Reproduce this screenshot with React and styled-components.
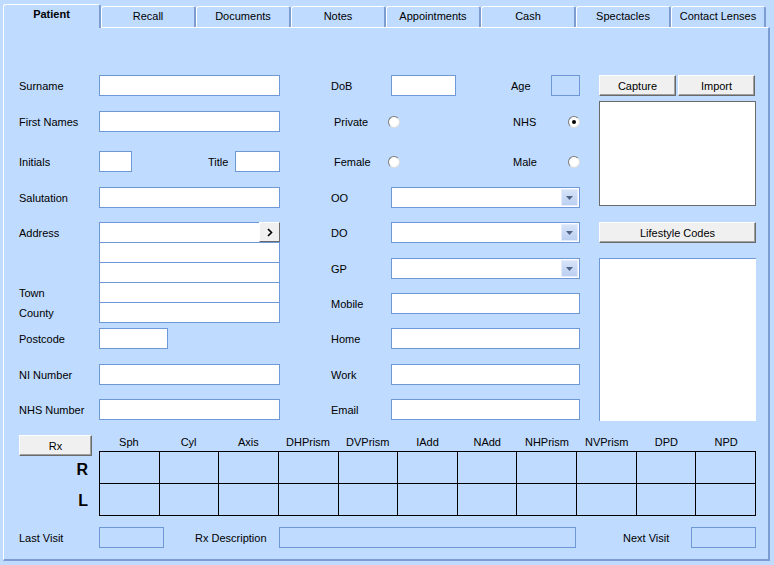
import React from 'react';
import styled, { createGlobalStyle } from 'styled-components';

const GlobalStyle = createGlobalStyle`
  html, body {
    margin: 0;
    padding: 0;
    background: #bfdbff;
  }
  body {
    font-family: "Liberation Sans", Arial, sans-serif;
    font-size: 11px;
    color: #000;
  }
  * {
    box-sizing: border-box;
  }
`;

const Screen = styled.div`
    width: 774px;
    height: 565px;
    padding: 4px 0 0 3px;
    background: #bfdbff;
`;

const TabStrip = styled.div`
    display: flex;
    align-items: flex-end;
    height: 23px;
`;

const Tab = styled.div`
    position: relative;
    z-index: ${p => (p.$active ? 2 : 1)};
    display: flex;
    align-items: center;
    justify-content: center;
    width: ${p => (p.$active ? 98 : 95)}px;
    height: ${p => (p.$active ? 24 : 21)}px;
    margin-bottom: ${p => (p.$active ? -1 : 0)}px;
    padding-bottom: ${p => (p.$active ? 5 : 3)}px;
    background: #bfdbff;
    border-top: 1px solid #ffffff;
    border-left: 1px solid #ffffff;
    border-right: 2px solid #7c9cd2;
    border-radius: 3px 3px 0 0;
    font-weight: ${p => (p.$active ? 'bold' : 'normal')};
`;

const Panel = styled.div`
    width: 767px;
    height: 534px;
    padding: 47px 0 0 15px;
    background: #bfdbff;
    border-top: 1px solid #ffffff;
    border-left: 1px solid #ffffff;
    border-right: 2px solid #7c9cd2;
    border-bottom: 2px solid #7c9cd2;
`;

const Main = styled.div`
    display: flex;
    align-items: flex-start;
`;

const Column = styled.div`
    display: flex;
    flex-direction: column;
    width: ${p => p.$w}px;
    margin-left: ${p => p.$ml || 0}px;
`;

const Row = styled.div`
    display: flex;
    align-items: center;
    height: 21px;
    margin-top: ${p => p.$mt || 0}px;
`;

const BottomRow = styled(Row)`
    width: 737px;
`;

const Label = styled.span`
    flex-shrink: 0;
    width: ${p => p.$w}px;
    padding-left: ${p => p.$pl || 0}px;
    margin-left: ${p => (p.$push ? 'auto' : p.$ml ? `${p.$ml}px` : '0')};
    white-space: nowrap;
`;

const TextBox = styled.div`
    flex-shrink: 0;
    width: ${p => p.$w}px;
    height: 21px;
    background: ${p => (p.$off ? 'transparent' : '#ffffff')};
    border: 1px solid #6f98d8;
`;

const ComboBox = styled(TextBox)`
    display: flex;
    justify-content: flex-end;
    padding: 1px;
`;

const DropButton = styled.div`
    display: flex;
    align-items: center;
    justify-content: center;
    width: 17px;
    background: linear-gradient(#d6e3f8, #bcd0f2);
    border: 1px solid #e4ecfb;
`;

const AddressBlock = styled.div`
    display: flex;
    margin-top: ${p => p.$mt}px;
`;

const AddressLabels = styled.div`
    display: flex;
    flex-direction: column;
    width: 80px;
`;

const AddressLabel = styled.div`
    display: flex;
    align-items: center;
    height: 20px;
    margin-top: ${p => (p.$first ? 1 : 0)}px;
`;

const AddressLines = styled.div`
    display: flex;
    flex-direction: column;
    width: 181px;
`;

const AddressLine = styled.div`
    display: flex;
    justify-content: flex-end;
    height: 21px;
    margin-top: ${p => (p.$first ? 0 : -1)}px;
    background: #ffffff;
    border: 1px solid #6f98d8;
`;

const ArrowButton = styled.div`
    display: flex;
    align-items: center;
    justify-content: center;
    width: 21px;
    height: 20px;
    margin: -1px -1px 0 0;
    background: #f0f0f0;
    border-top: 1px solid #ffffff;
    border-left: 1px solid #ffffff;
    border-right: 1px solid #696969;
    border-bottom: 1px solid #696969;
`;

const RadioGroup = styled.div`
    display: flex;
    align-items: center;
    margin-left: ${p => (p.$push ? 'auto' : '0')};
`;

const Radio = styled.span`
    display: flex;
    align-items: center;
    justify-content: center;
    width: 12px;
    height: 12px;
    border-radius: 50%;
    background: #ffffff;
    border: 1px solid;
    border-color: #7a7a7a #dcdcdc #dcdcdc #7a7a7a;
`;

const Dot = styled.span`
    width: 4px;
    height: 4px;
    border-radius: 50%;
    background: #000;
`;

const Button = styled.div`
    display: flex;
    align-items: center;
    justify-content: center;
    width: ${p => p.$w}px;
    height: 21px;
    margin-top: ${p => p.$mt || 0}px;
    background: #f0f0f0;
    border-top: 1px solid #ffffff;
    border-left: 1px solid #ffffff;
    border-right: 1px solid #696969;
    border-bottom: 1px solid #696969;
    box-shadow: inset -1px -1px 0 #a0a0a0;
`;

const ButtonRow = styled.div`
    display: flex;
    gap: 2px;
`;

const PhotoBox = styled.div`
    width: 157px;
    height: 105px;
    margin-top: 5px;
    background: #ffffff;
    border: 1px solid #6a6a6a;
`;

const ListBox = styled.div`
    width: 157px;
    height: 163px;
    margin-top: 15px;
    background: #ffffff;
    border-top: 1px solid #6f98d8;
    border-left: 1px solid #6f98d8;
`;

const RxSection = styled.div`
    display: grid;
    grid-template-columns: 80px 657px;
    grid-template-rows: 16px 65px;
    margin-top: 14px;
`;

const RxButtonCell = styled.div`
    align-self: start;
`;

const Headers = styled.div`
    display: grid;
    grid-template-columns: repeat(11, 1fr);
    align-items: center;
    padding-bottom: 2px;
`;

const Header = styled.span`
    text-align: center;
`;

const EyeLabels = styled.div`
    display: flex;
    flex-direction: column;
    align-items: flex-end;
    padding: 3px 11px 0 0;
`;

const Eye = styled.div`
    display: flex;
    align-items: center;
    height: 32px;
    font-size: 16px;
    font-weight: bold;
`;

const Cells = styled.div`
    display: grid;
    grid-template-columns: repeat(11, 1fr);
    grid-auto-rows: 32px;
    border-top: 1px solid #000;
    border-left: 1px solid #000;
`;

const Cell = styled.div`
    border-right: 1px solid #000;
    border-bottom: 1px solid #000;
`;

const rxColumns = ['Sph', 'Cyl', 'Axis', 'DHPrism', 'DVPrism', 'IAdd', 'NAdd', 'NHPrism', 'NVPrism', 'DPD', 'NPD'];
const tabs = ['Patient', 'Recall', 'Documents', 'Notes', 'Appointments', 'Cash', 'Spectacles', 'Contact Lenses'];

function Combo() {
    return (
        <ComboBox $w={189}>
            <DropButton>
                <svg width="7" height="4" viewBox="0 0 7 4">
                    <path d="M0 0 H7 L3.5 4 Z" fill="#4f6387" />
                </svg>
            </DropButton>
        </ComboBox>
    );
}

function RadioPair({ label, width, checked, push }) {
    return (
        <RadioGroup $push={push}>
            <Label $w={width} $pl={push ? 0 : 3}>{label}</Label>
            <Radio>{checked && <Dot />}</Radio>
        </RadioGroup>
    );
}

function App() {
    return (
        <Screen>
            <GlobalStyle />
            <TabStrip>
                {tabs.map((t, i) => (
                    <Tab key={t} $active={i === 0}>{t}</Tab>
                ))}
            </TabStrip>
            <Panel>
                <Main>
                    <Column $w={261}>
                        <Row>
                            <Label $w={80}>Surname</Label>
                            <TextBox $w={181} />
                        </Row>
                        <Row $mt={15}>
                            <Label $w={80}>First Names</Label>
                            <TextBox $w={181} />
                        </Row>
                        <Row $mt={19}>
                            <Label $w={80}>Initials</Label>
                            <TextBox $w={33} />
                            <Label $w={27} $push>Title</Label>
                            <TextBox $w={45} />
                        </Row>
                        <Row $mt={15}>
                            <Label $w={80}>Salutation</Label>
                            <TextBox $w={181} />
                        </Row>
                        <AddressBlock $mt={14}>
                            <AddressLabels>
                                <AddressLabel $first>Address</AddressLabel>
                                <AddressLabel />
                                <AddressLabel />
                                <AddressLabel>Town</AddressLabel>
                                <AddressLabel>County</AddressLabel>
                            </AddressLabels>
                            <AddressLines>
                                <AddressLine $first>
                                    <ArrowButton>
                                        <svg width="6" height="9" viewBox="0 0 6 9">
                                            <path d="M1 1 L4.5 4.5 L1 8" fill="none" stroke="#000" strokeWidth="1.6" />
                                        </svg>
                                    </ArrowButton>
                                </AddressLine>
                                <AddressLine />
                                <AddressLine />
                                <AddressLine />
                                <AddressLine />
                            </AddressLines>
                        </AddressBlock>
                        <Row $mt={5}>
                            <Label $w={80}>Postcode</Label>
                            <TextBox $w={69} />
                        </Row>
                        <Row $mt={15}>
                            <Label $w={80}>NI Number</Label>
                            <TextBox $w={181} />
                        </Row>
                        <Row $mt={14}>
                            <Label $w={80}>NHS Number</Label>
                            <TextBox $w={181} />
                        </Row>
                    </Column>

                    <Column $w={249} $ml={51}>
                        <Row>
                            <Label $w={60}>DoB</Label>
                            <TextBox $w={65} />
                            <Label $w={40} $push>Age</Label>
                            <TextBox $w={29} $off />
                        </Row>
                        <Row $mt={15}>
                            <RadioPair label="Private" width={57} />
                            <RadioPair label="NHS" width={55} checked push />
                        </Row>
                        <Row $mt={19}>
                            <RadioPair label="Female" width={57} />
                            <RadioPair label="Male" width={55} push />
                        </Row>
                        <Row $mt={15}>
                            <Label $w={60}>OO</Label>
                            <Combo />
                        </Row>
                        <Row $mt={14}>
                            <Label $w={60}>DO</Label>
                            <Combo />
                        </Row>
                        <Row $mt={15}>
                            <Label $w={60}>GP</Label>
                            <Combo />
                        </Row>
                        <Row $mt={14}>
                            <Label $w={60}>Mobile</Label>
                            <TextBox $w={189} />
                        </Row>
                        <Row $mt={14}>
                            <Label $w={60}>Home</Label>
                            <TextBox $w={189} />
                        </Row>
                        <Row $mt={15}>
                            <Label $w={60}>Work</Label>
                            <TextBox $w={189} />
                        </Row>
                        <Row $mt={14}>
                            <Label $w={60}>Email</Label>
                            <TextBox $w={189} />
                        </Row>
                    </Column>

                    <Column $w={157} $ml={19}>
                        <ButtonRow>
                            <Button $w={77}>Capture</Button>
                            <Button $w={77}>Import</Button>
                        </ButtonRow>
                        <PhotoBox />
                        <Button $w={157} $mt={16}>Lifestyle Codes</Button>
                        <ListBox />
                    </Column>
                </Main>

                <RxSection>
                    <RxButtonCell>
                        <Button $w={73}>Rx</Button>
                    </RxButtonCell>
                    <Headers>
                        {rxColumns.map(c => (
                            <Header key={c}>{c}</Header>
                        ))}
                    </Headers>
                    <EyeLabels>
                        <Eye>R</Eye>
                        <Eye>L</Eye>
                    </EyeLabels>
                    <Cells>
                        {Array.from({ length: 22 }, (_, i) => (
                            <Cell key={i} />
                        ))}
                    </Cells>
                </RxSection>

                <BottomRow $mt={11}>
                    <Label $w={80}>Last Visit</Label>
                    <TextBox $w={65} $off />
                    <Label $w={84} $ml={31}>Rx Description</Label>
                    <TextBox $w={297} $off />
                    <Label $w={68} $push>Next Visit</Label>
                    <TextBox $w={65} $off />
                </BottomRow>
            </Panel>
        </Screen>
    );
}

export default App;
